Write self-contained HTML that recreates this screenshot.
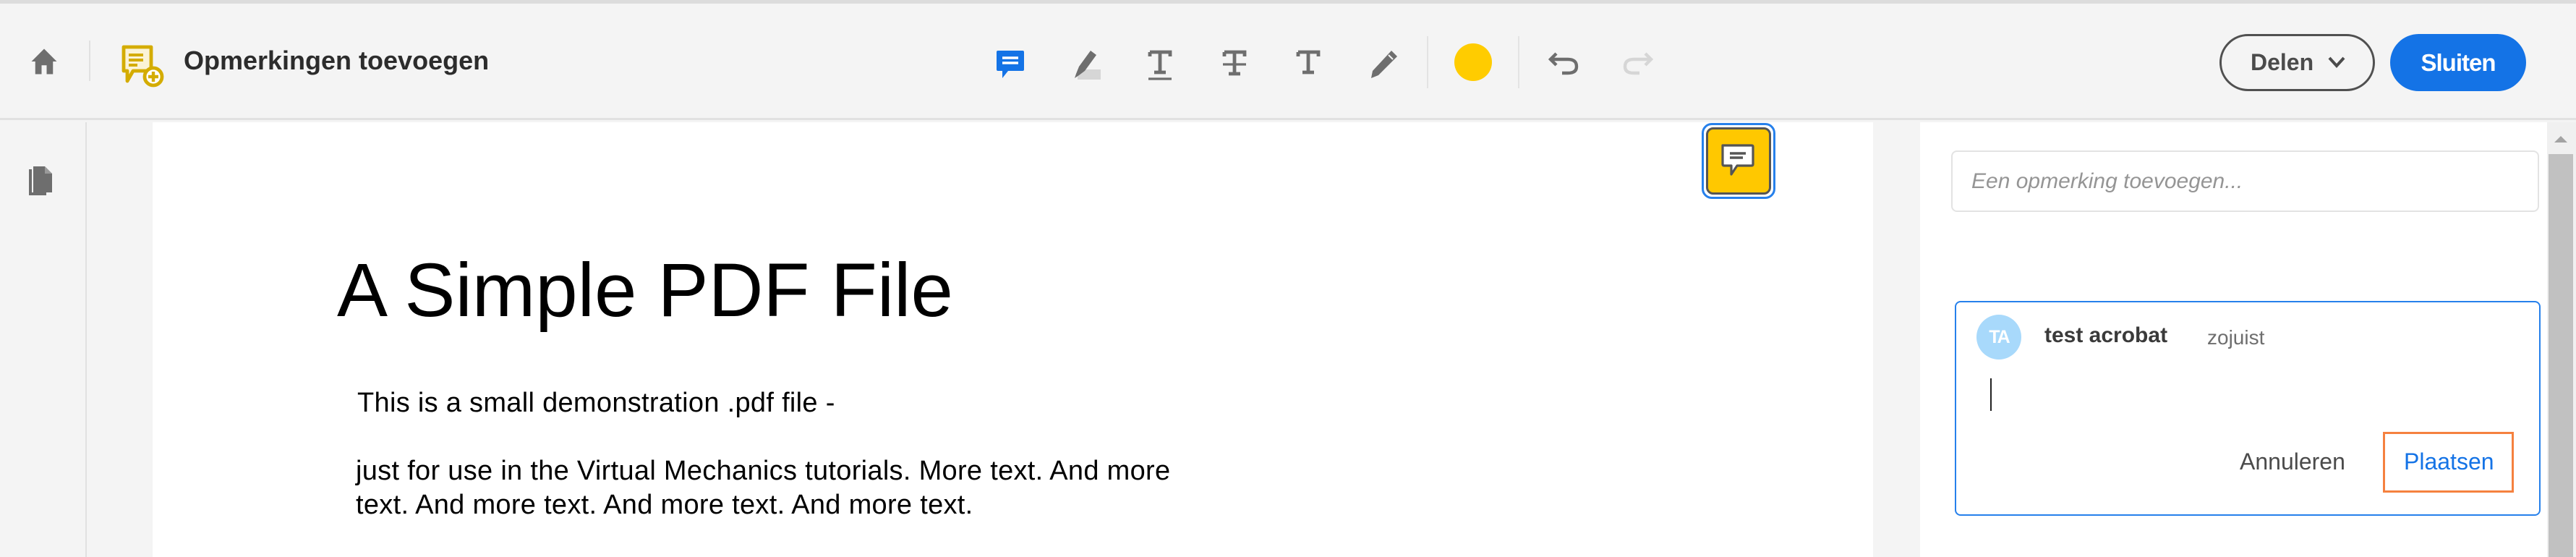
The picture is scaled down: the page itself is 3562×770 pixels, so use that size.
<!DOCTYPE html>
<html><head><meta charset="utf-8"><style>
*{margin:0;padding:0;box-sizing:border-box}
body{width:3562px;height:770px;position:relative;overflow:hidden;background:#f4f4f4;font-family:"Liberation Sans",sans-serif}
.a{position:absolute}
</style></head><body>
<div class="a" style="left:0;top:0;width:3562px;height:5px;background:#dcdcdc"></div>
<div class="a" style="left:0;top:5px;width:3562px;height:161px;background:#f4f4f4;border-bottom:3px solid #e1e1e1"></div>
<svg class="a" style="left:40px;top:64px" width="42" height="42" viewBox="0 0 24 24"><path d="M12 2 L2 12 H5 V22 H10 V15 H14 V22 H19 V12 H22 Z" fill="#6e6e6e"/></svg>
<div class="a" style="left:123px;top:56px;width:2px;height:56px;background:#e1e1e1"></div>
<svg class="a" style="left:168px;top:62px" width="62" height="60" viewBox="0 0 31 30"><path d="M1.5 1.5 H20.5 V18 H8 L4 25 V18 H1.5 Z" fill="#fbf3d6" stroke="#d4ac00" stroke-width="2.4" stroke-linejoin="round"/><path d="M5 7 H15 M5 10.5 H15 M5 14 H11" stroke="#d4ac00" stroke-width="2"/><circle cx="22" cy="22" r="6" fill="#fff" stroke="#d4ac00" stroke-width="2.4"/><path d="M22 18.5 V25.5 M18.5 22 H25.5" stroke="#d4ac00" stroke-width="2.2"/></svg>
<div class="a" style="left:254px;top:63px;font-size:36px;font-weight:bold;color:#2c2c2c">Opmerkingen toevoegen</div>
<svg class="a" style="left:1376px;top:68px" width="42" height="44" viewBox="0 0 21 22"><path d="M1 2 Q1 1 2 1 H19 Q20 1 20 2 V14 Q20 15 19 15 H9 L5 20 V15 H2 Q1 15 1 14 Z" fill="#1473e6"/><path d="M5 6 H16 M5 9.5 H16" stroke="#fff" stroke-width="1.8"/></svg>
<svg class="a" style="left:1478px;top:68px" width="48" height="44" viewBox="0 0 24 22"><rect x="6" y="14" width="16" height="7" fill="#d6d6d6"/><path d="M15 1 L19 4 L11 15 L7 12 Z M7 12 L5 17 L4 20 L7 18 L11 15" fill="#6e6e6e"/></svg>
<svg class="a" style="left:1586px;top:68px" width="36" height="44" viewBox="0 0 18 22"><path d="M2 2 H16 V5 M2 2 V5 M9 2 V16 M5 16 H13" stroke="#6e6e6e" stroke-width="2.4" fill="none"/><path d="M1 20.5 H17" stroke="#6e6e6e" stroke-width="1.6"/></svg>
<svg class="a" style="left:1689px;top:68px" width="36" height="44" viewBox="0 0 18 22"><path d="M2 2 H16 V5 M2 2 V5 M9 2 V17 M5 17 H13" stroke="#6e6e6e" stroke-width="2.4" fill="none"/><path d="M1 10.5 H17" stroke="#6e6e6e" stroke-width="1.6"/></svg>
<svg class="a" style="left:1791px;top:68px" width="36" height="44" viewBox="0 0 18 22"><path d="M2 2 H16 V5 M2 2 V5 M9 2 V16 M5 16 H13" stroke="#6e6e6e" stroke-width="2.4" fill="none"/></svg>
<svg class="a" style="left:1892px;top:68px" width="42" height="44" viewBox="0 0 21 22"><path d="M16 1 L20 5 L7 18 L2 20 L3 15 Z" fill="#6e6e6e"/><path d="M14 4 L17 7" stroke="#f4f4f4" stroke-width="1"/></svg>
<div class="a" style="left:1973px;top:50px;width:2px;height:72px;background:#e3e3e3"></div>
<div class="a" style="left:2011px;top:60px;width:52px;height:52px;border-radius:50%;background:#ffcc00"></div>
<div class="a" style="left:2099px;top:50px;width:2px;height:72px;background:#e3e3e3"></div>
<svg class="a" style="left:2140px;top:70px" width="46" height="34" viewBox="0 0 23 17"><path d="M6 2 L2 6 L6 10" stroke="#6e6e6e" stroke-width="2.2" fill="none"/><path d="M2.5 6 H14 Q20 6 20 11 Q20 15.5 14 15.5 H10" stroke="#6e6e6e" stroke-width="2.2" fill="none"/></svg>
<svg class="a" style="left:2241px;top:70px" width="46" height="34" viewBox="0 0 23 17"><path d="M17 2 L21 6 L17 10" stroke="#d6d6d6" stroke-width="2.2" fill="none"/><path d="M20.5 6 H9 Q3 6 3 11 Q3 15.5 9 15.5 H13" stroke="#d6d6d6" stroke-width="2.2" fill="none"/></svg>
<div class="a" style="left:3069px;top:47px;width:215px;height:79px;border:3px solid #505050;border-radius:40px;font-size:32px;font-weight:bold;color:#4b4b4b;line-height:73px;padding-left:40px">Delen</div>
<svg class="a" style="left:3218px;top:76px" width="26" height="20" viewBox="0 0 13 10"><path d="M1.5 2 L6.5 7.5 L11.5 2" stroke="#4b4b4b" stroke-width="2" fill="none"/></svg>
<div class="a" style="left:3305px;top:47px;width:188px;height:79px;background:#1473e6;border-radius:40px;font-size:33px;font-weight:bold;color:#fff;line-height:79px;text-align:center;letter-spacing:-1px">Sluiten</div>
<div class="a" style="left:118px;top:169px;width:2px;height:601px;background:#e1e1e1"></div>
<svg class="a" style="left:36px;top:228px" width="40" height="46" viewBox="0 0 20 23"><path d="M4 3 V19 H14 V21 H2 V3 Z" fill="#6e6e6e"/><path d="M5 1 H13 L18 6 V19 H5 Z" fill="#6e6e6e"/><path d="M13 1 V6 H18" fill="#9a9a9a"/></svg>
<div class="a" style="left:211px;top:169px;width:2379px;height:601px;background:#fff"></div>
<div class="a" style="left:466px;top:342px;font-size:105px;color:#000;white-space:nowrap">A Simple PDF File</div>
<div class="a" style="left:494px;top:536px;font-size:38px;color:#000;white-space:nowrap;letter-spacing:0.3px">This is a small demonstration .pdf file -</div>
<div class="a" style="left:492px;top:628px;font-size:38px;line-height:47px;color:#000;white-space:nowrap;letter-spacing:0.3px">just for use in the Virtual Mechanics tutorials. More text. And more<br>text. And more text. And more text. And more text.</div>
<div class="a" style="left:2353px;top:170px;width:102px;height:105px;border:3px solid #2680eb;border-radius:14px;background:#fff;padding:3px">
<div style="width:100%;height:100%;background:#ffc800;border:3px solid #555;border-radius:10px"></div></div>
<svg class="a" style="left:2378px;top:197px" width="52" height="52" viewBox="0 0 26 26"><path d="M2 2 H22 Q23 2 23 3 V15 Q23 16 22 16 H12 L8 22 V16 H3 Q2 16 2 15 Z" fill="#fff" stroke="#555" stroke-width="1.6" stroke-linejoin="round"/><path d="M7 7.5 H18 M7 10.5 H16" stroke="#555" stroke-width="1.8"/></svg>
<div class="a" style="left:2655px;top:169px;width:867px;height:601px;background:#fff"></div>
<div class="a" style="left:3522px;top:169px;width:40px;height:601px;background:#f0f0f0"></div>
<div class="a" style="left:3524px;top:213px;width:34px;height:557px;background:#c1c1c1"></div>
<svg class="a" style="left:3530px;top:185px" width="22" height="14" viewBox="0 0 22 14"><path d="M2 12 L11 3 L20 12 Z" fill="#a3a3a3"/></svg>
<div class="a" style="left:2698px;top:208px;width:813px;height:85px;border:2px solid #e3e3e3;border-radius:8px;font-size:30px;font-style:italic;color:#959595;line-height:81px;padding-left:26px">Een opmerking toevoegen...</div>
<div class="a" style="left:2703px;top:416px;width:810px;height:297px;border:2px solid #2680eb;border-radius:8px"></div>
<div class="a" style="left:2733px;top:435px;width:62px;height:62px;border-radius:50%;background:#a8d9fb;color:#fff;font-size:25px;font-weight:bold;text-align:center;line-height:62px;letter-spacing:-2px">TA</div>
<div class="a" style="left:2827px;top:447px;font-size:30px;font-weight:bold;color:#3a3a3a">test acrobat</div>
<div class="a" style="left:3052px;top:451px;font-size:28px;color:#6e6e6e">zojuist</div>
<div class="a" style="left:2752px;top:523px;width:2px;height:45px;background:#222"></div>
<div class="a" style="left:3097px;top:620px;font-size:32px;color:#4b4b4b">Annuleren</div>
<div class="a" style="left:3295px;top:597px;width:181px;height:84px;border:3px solid #f5813f"></div>
<div class="a" style="left:3324px;top:620px;font-size:32px;color:#1473e6">Plaatsen</div>
</body></html>
